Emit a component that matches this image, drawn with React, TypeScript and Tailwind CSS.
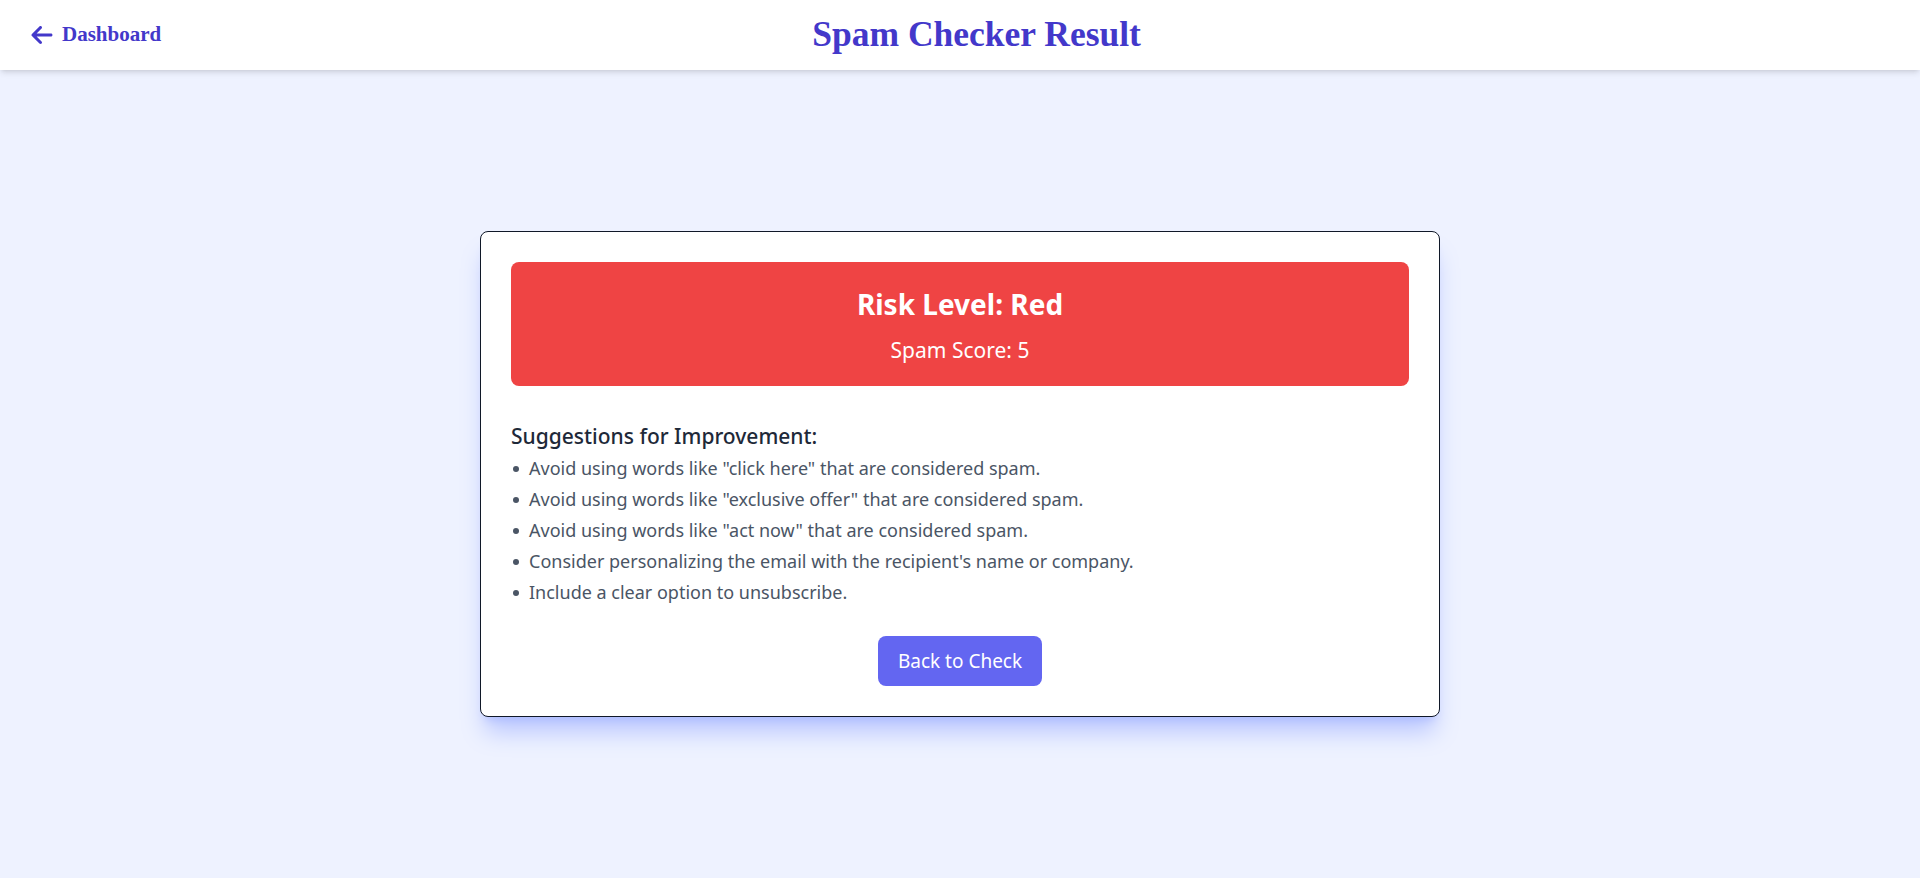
import React from "react";
import { FaArrowLeft } from "react-icons/fa6";

const suggestions = [
  'Avoid using words like "click here" that are considered spam.',
  'Avoid using words like "exclusive offer" that are considered spam.',
  'Avoid using words like "act now" that are considered spam.',
  "Consider personalizing the email with the recipient's name or company.",
  "Include a clear option to unsubscribe.",
];

export default function App() {
  return (
    <div className="min-h-screen bg-[#eef2ff] flex flex-col font-['Noto_Sans',sans-serif]">
      <header className="h-[70px] bg-white shadow-md flex items-center pl-[30px] pr-8 relative z-10">
        <a
          href="#"
          className="flex items-center gap-[8px] text-[#4338ca] font-['Liberation_Serif',serif] font-bold text-[21px]"
        >
          <FaArrowLeft size={24} />
          <span>Dashboard</span>
        </a>
        <h1 className="flex-1 text-center pr-[96px] text-[#4338ca] font-['Liberation_Serif',serif] font-bold text-[35.5px] leading-none">
          Spam Checker Result
        </h1>
      </header>
      <main className="flex-1 flex items-center justify-center">
        <div className="w-[960px] bg-white border border-gray-900 rounded-lg p-[30px] shadow-xl shadow-indigo-300/70">
          <div className="bg-[#ef4444] rounded-lg pt-[26px] pb-[22px] text-center text-white">
            <div className="text-[28px] font-bold leading-8">Risk Level: Red</div>
            <div className="text-[21px] leading-7 mt-4">Spam Score: 5</div>
          </div>
          <h2 className="mt-9 text-[21px] leading-7 font-medium text-gray-800">
            Suggestions for Improvement:
          </h2>
          <ul className="mt-[3px] text-lg leading-[31px] text-gray-600">
            {suggestions.map((s) => (
              <li key={s} className="flex items-center">
                <span className="w-[18px] shrink-0 flex items-center">
                  <span className="w-[6px] h-[6px] rounded-full bg-gray-600 ml-[2px]" />
                </span>
                <span>{s}</span>
              </li>
            ))}
          </ul>
          <div className="mt-7 flex justify-center">
            <button className="h-[50px] px-5 rounded-lg bg-[#6366f1] text-white text-[19px]">
              Back to Check
            </button>
          </div>
        </div>
      </main>
    </div>
  );
}
